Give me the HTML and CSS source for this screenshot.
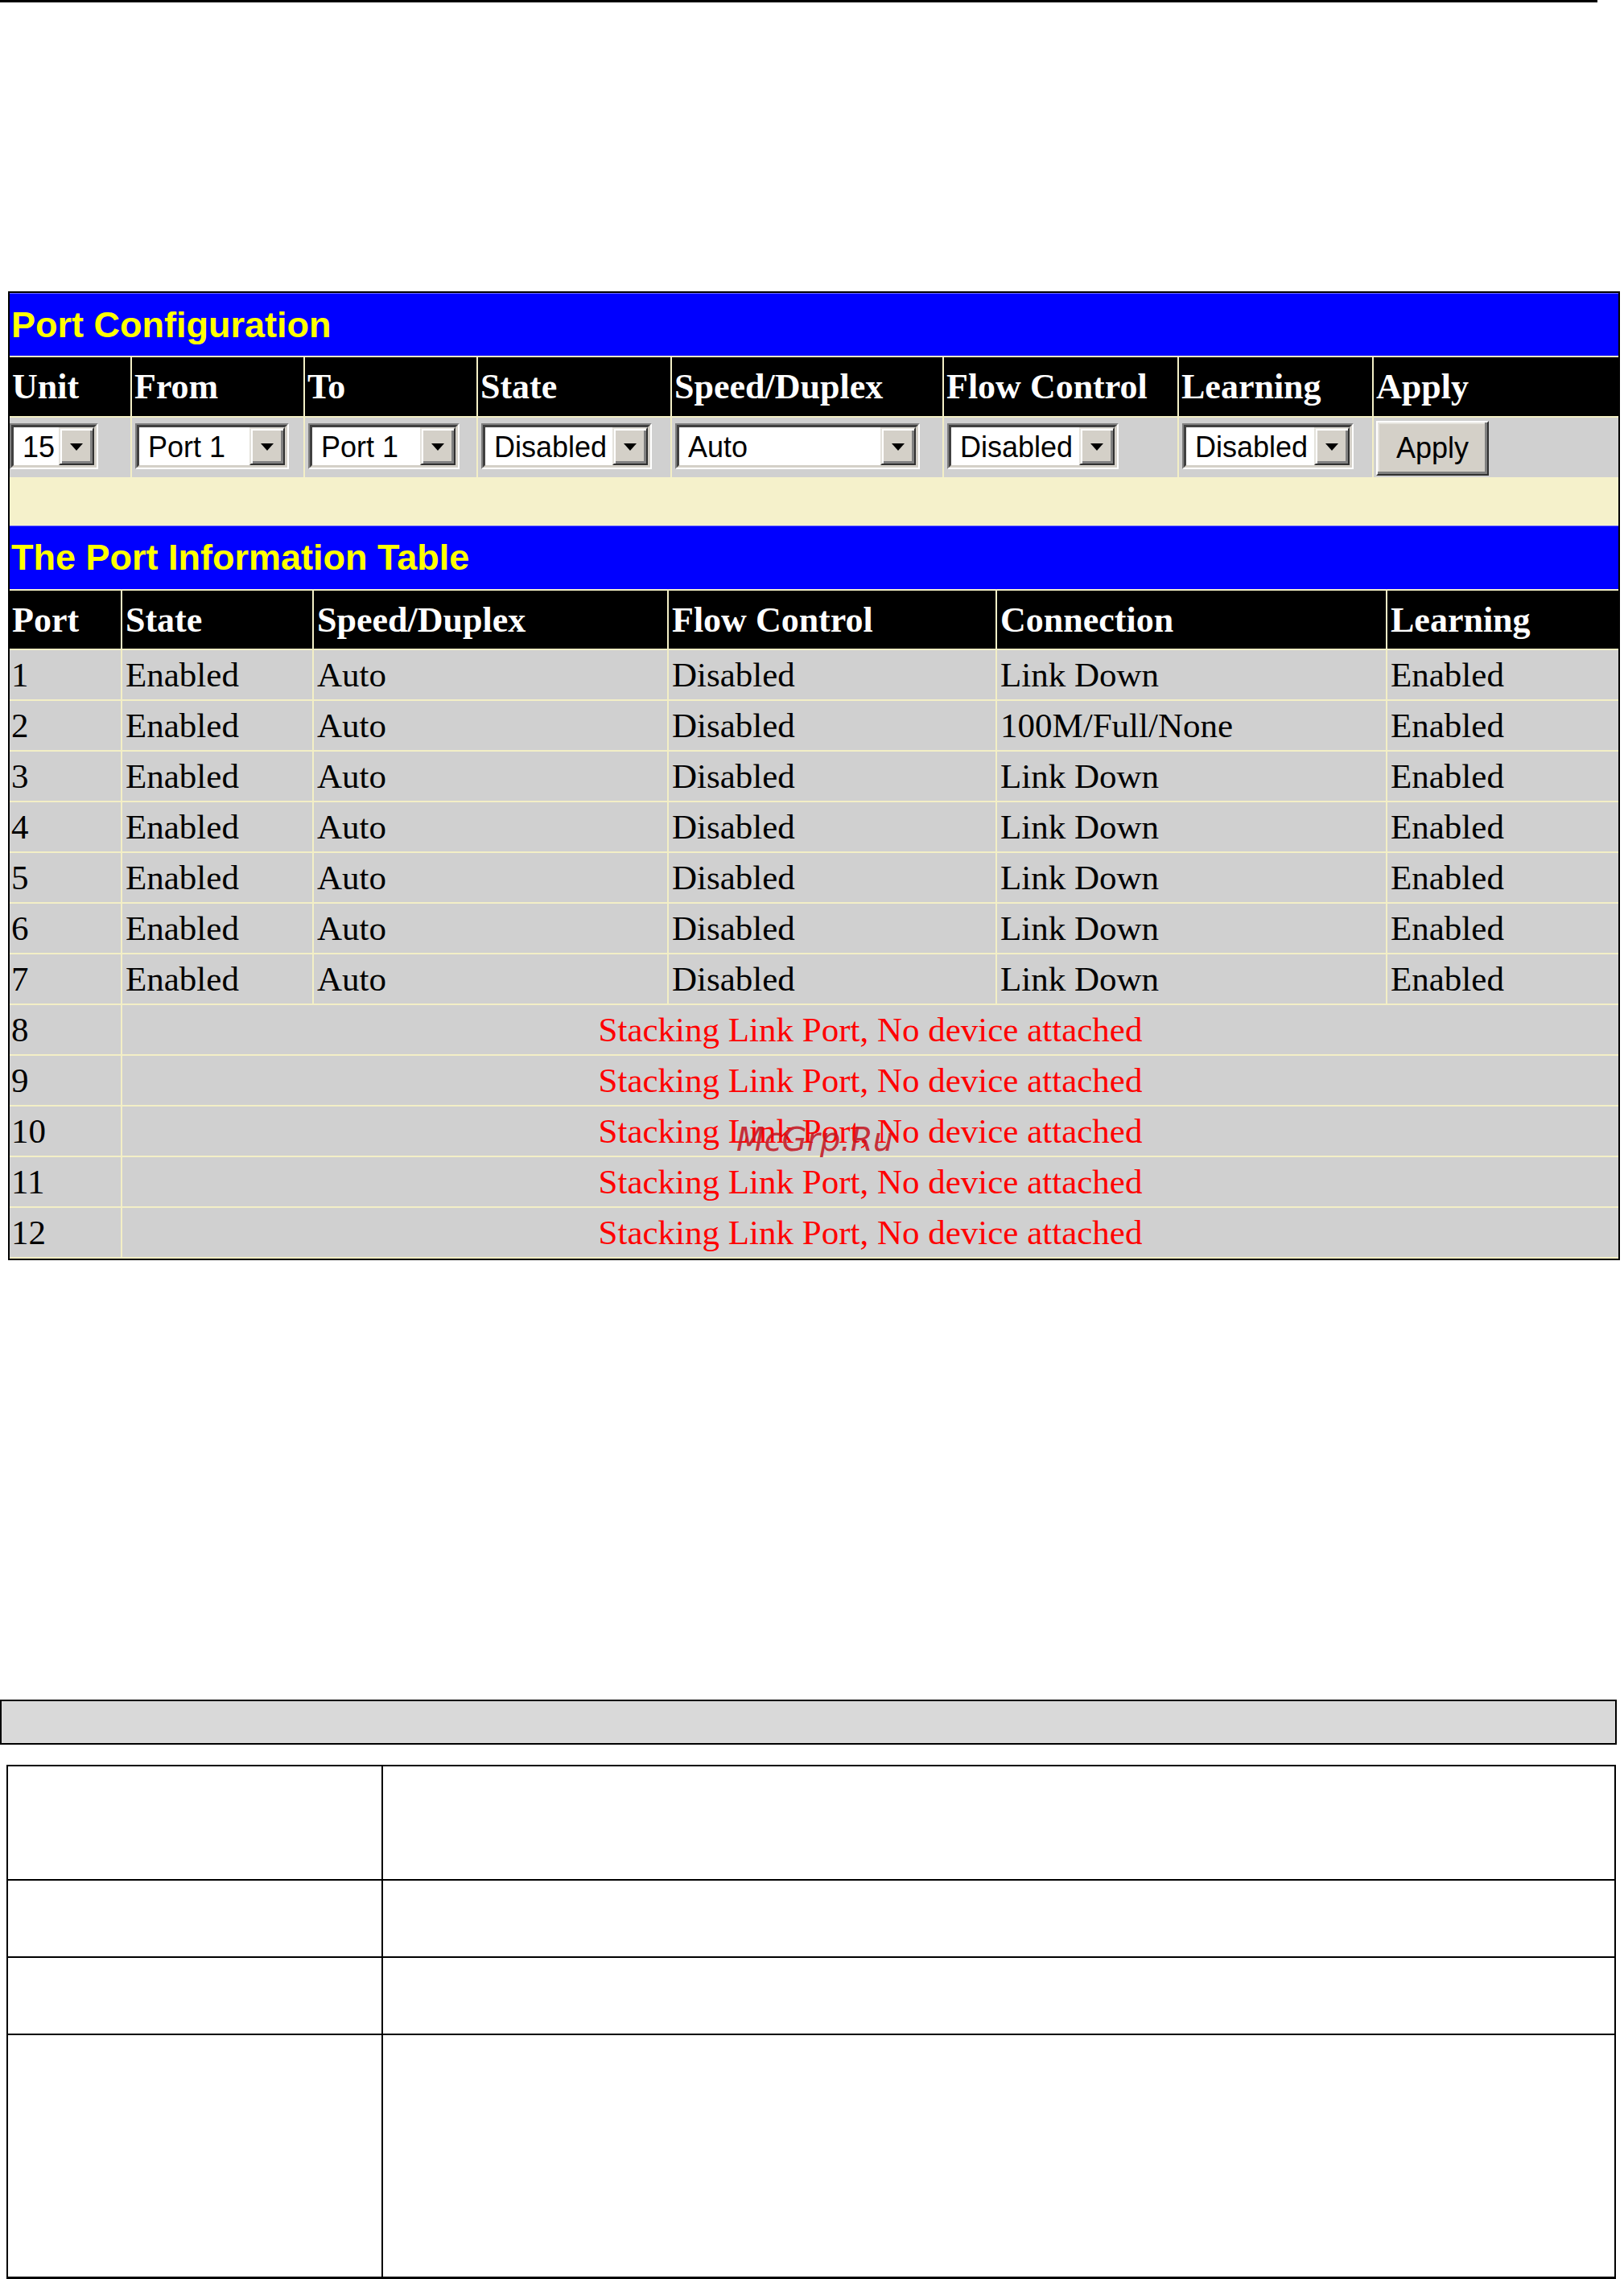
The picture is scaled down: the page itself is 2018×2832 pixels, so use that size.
FILE: index.html
```html
<!DOCTYPE html>
<html>
<head>
<meta charset="utf-8">
<title>Port Configuration</title>
<link rel="stylesheet" href="styles.css">
</head>
<body>
<div class="rule"></div>

<div class="shot">
  <div class="title">Port Configuration</div>
  <div class="cfg hdr">
    <div>Unit</div><div>From</div><div>To</div><div>State</div><div>Speed/Duplex</div><div>Flow Control</div><div>Learning</div><div>Apply</div>
  </div>
  <div class="cfg ctrl">
    <div class="first"><span class="sel w-unit"><span class="sel-in"><span class="val">15</span><span class="arr"></span></span></span></div>
    <div><span class="sel w-from"><span class="sel-in"><span class="val">Port 1</span><span class="arr"></span></span></span></div>
    <div><span class="sel w-to"><span class="sel-in"><span class="val">Port 1</span><span class="arr"></span></span></span></div>
    <div><span class="sel w-state"><span class="sel-in"><span class="val">Disabled</span><span class="arr"></span></span></span></div>
    <div><span class="sel w-speed"><span class="sel-in"><span class="val">Auto</span><span class="arr"></span></span></span></div>
    <div><span class="sel w-flow"><span class="sel-in"><span class="val">Disabled</span><span class="arr"></span></span></span></div>
    <div><span class="sel w-learn"><span class="sel-in"><span class="val">Disabled</span><span class="arr"></span></span></span></div>
    <div class="last"><button class="btn" type="button">Apply</button></div>
  </div>
  <div class="band"></div>
  <div class="title t2">The Port Information Table</div>
  <div class="info hdr">
    <div>Port</div><div>State</div><div>Speed/Duplex</div><div>Flow Control</div><div>Connection</div><div>Learning</div>
  </div>
  <div class="info row"><div>1</div><div>Enabled</div><div>Auto</div><div>Disabled</div><div>Link Down</div><div>Enabled</div></div>
  <div class="info row"><div>2</div><div>Enabled</div><div>Auto</div><div>Disabled</div><div>100M/Full/None</div><div>Enabled</div></div>
  <div class="info row"><div>3</div><div>Enabled</div><div>Auto</div><div>Disabled</div><div>Link Down</div><div>Enabled</div></div>
  <div class="info row"><div>4</div><div>Enabled</div><div>Auto</div><div>Disabled</div><div>Link Down</div><div>Enabled</div></div>
  <div class="info row"><div>5</div><div>Enabled</div><div>Auto</div><div>Disabled</div><div>Link Down</div><div>Enabled</div></div>
  <div class="info row"><div>6</div><div>Enabled</div><div>Auto</div><div>Disabled</div><div>Link Down</div><div>Enabled</div></div>
  <div class="info row"><div>7</div><div>Enabled</div><div>Auto</div><div>Disabled</div><div>Link Down</div><div>Enabled</div></div>
  <div class="info row"><div>8</div><div class="msg">Stacking Link Port, No device attached</div></div>
  <div class="info row"><div>9</div><div class="msg">Stacking Link Port, No device attached</div></div>
  <div class="info row"><div>10</div><div class="msg">Stacking Link Port, No device attached</div></div>
  <div class="info row"><div>11</div><div class="msg">Stacking Link Port, No device attached</div></div>
  <div class="info row"><div>12</div><div class="msg">Stacking Link Port, No device attached</div></div>
  <span class="wm">McGrp.Ru</span>
</div>

<div class="bar"></div>

<div class="desc">
  <div class="dl"></div><div class="dr"></div>
  <div class="dl"></div><div class="dr"></div>
  <div class="dl"></div><div class="dr"></div>
  <div class="dl end"></div><div class="dr end"></div>
</div>
</body>
</html>
```

FILE: styles.css
```css
* { box-sizing: border-box; }

html, body {
  margin: 0;
  padding: 0;
  background: #ffffff;
}

body {
  width: 2018px;
  font-family: "Liberation Serif", "Times New Roman", serif;
  color: #000000;
}

.rule {
  width: 1985px;
  height: 3px;
  background: #000000;
}

/* screenshot frame */
.shot {
  position: relative;
  margin: 359px 0 0 10px;
  width: 2003px;
  border: 2px solid #000000;
  background: #f5f1cb;
}

.title {
  height: 80px;
  border-top: 1px solid #7070ff;
  border-bottom: 2px solid #f3efc6;
  background: #0000ff;
  color: #ffff00;
  font: bold 45px/77px "Liberation Sans", Arial, sans-serif;
  padding-left: 2px;
  white-space: nowrap;
}

.title.t2 {
  height: 81px;
  line-height: 78px;
}

.cfg {
  display: grid;
  grid-template-columns: 152px 215px 215px 241px 338px 292px 242px 304px;
}

.info {
  display: grid;
  grid-template-columns: 140px 238px 441px 408px 485px 287px;
}

.hdr {
  background: #000000;
  color: #ffffff;
  font-weight: bold;
  font-size: 44px;
  border-bottom: 2px solid #f3efc6;
}

.cfg.hdr {
  height: 75px;
  line-height: 73px;
}

.info.hdr {
  height: 74px;
}

.info.hdr > div {
  padding-top: 2px;
  line-height: 70px;
}

.hdr > div,
.row > div {
  border-right: 2px solid #f3efc6;
  padding-left: 3px;
  white-space: nowrap;
  overflow: hidden;
}

.info > div + div {
  padding-left: 4px;
}

.hdr > div:last-child,
.row > div:last-child {
  border-right: 0;
}

/* control row */
.ctrl {
  height: 74px;
  background: #d0d0d0;
}

.ctrl > div {
  border-right: 2px solid #f3efc6;
  padding: 7px 0 0 4px;
}

.ctrl > div.first {
  padding-left: 0;
}

.ctrl > div.last {
  border-right: 0;
  padding: 4px 0 0 3px;
}

.sel {
  display: flex;
  height: 57px;
  border: 2px solid;
  border-color: #808080 #ffffff #ffffff #808080;
}

.sel-in {
  flex: 1;
  display: flex;
  min-width: 0;
  border: 3px solid;
  border-color: #404040 #d4d0c8 #d4d0c8 #404040;
  background: #ffffff;
}

.val {
  flex: 1;
  min-width: 0;
  padding: 3px 0 0 11px;
  font: 36px/43px "Liberation Sans", Arial, sans-serif;
  white-space: nowrap;
  overflow: hidden;
}

.arr {
  flex: none;
  width: 44px;
  display: flex;
  align-items: center;
  justify-content: center;
  background: #d4d0c8;
  border: 2px solid;
  border-color: #e4e2dc #303030 #303030 #e4e2dc;
  box-shadow: inset 2px 2px 0 #ffffff, inset -3px -3px 0 #808080;
}

.arr::after {
  content: "";
  width: 0;
  height: 0;
  margin: 2px 1px 0 0;
  border-left: 8px solid transparent;
  border-right: 8px solid transparent;
  border-top: 9px solid #000000;
}

.w-unit { width: 110px; }
.w-from { width: 191px; }
.w-to { width: 188px; }
.w-state { width: 212px; }
.w-speed { width: 304px; }
.w-flow { width: 213px; }
.w-learn { width: 213px; }

.btn {
  width: 140px;
  height: 68px;
  padding: 0;
  background: #d4d0c8;
  border: 2px solid;
  border-color: #ffffff #303030 #303030 #ffffff;
  box-shadow: inset -3px -3px 0 #808080, inset 2px 2px 0 #e6e4de;
  font: 36px/1 "Liberation Sans", Arial, sans-serif;
  color: #000000;
}

.band {
  height: 60px;
  background: #f5f1cb;
}

/* data rows */
.row {
  height: 63px;
  background: #d0d0d0;
  border-bottom: 2px solid #f3efc6;
  font-size: 43px;
  line-height: 61px;
}

.row > div:first-child {
  padding-left: 2px;
}

.row > .msg {
  grid-column: 2 / -1;
  text-align: center;
  color: #ff0000;
  padding-left: 0;
}

.wm {
  position: absolute;
  left: 903px;
  top: 1032px;
  font: oblique 40px/40px "DejaVu Sans", sans-serif;
  color: rgba(196, 24, 36, 0.9);
  white-space: nowrap;
}

/* lower document part */
.bar {
  margin-top: 546px;
  width: 2009px;
  height: 56px;
  border: 2px solid #000000;
  background: #d9d9d9;
}

.desc {
  margin: 25px 0 0 8px;
  width: 2000px;
  display: grid;
  grid-template-columns: 466px 1fr;
  grid-template-rows: 142px 96px 96px 300px;
  border: 2px solid #000000;
  border-bottom-width: 3px;
}

.desc > div {
  border-bottom: 2px solid #000000;
}

.desc > .dl {
  border-right: 2px solid #000000;
}

.desc > div.end {
  border-bottom: 0;
}
```
